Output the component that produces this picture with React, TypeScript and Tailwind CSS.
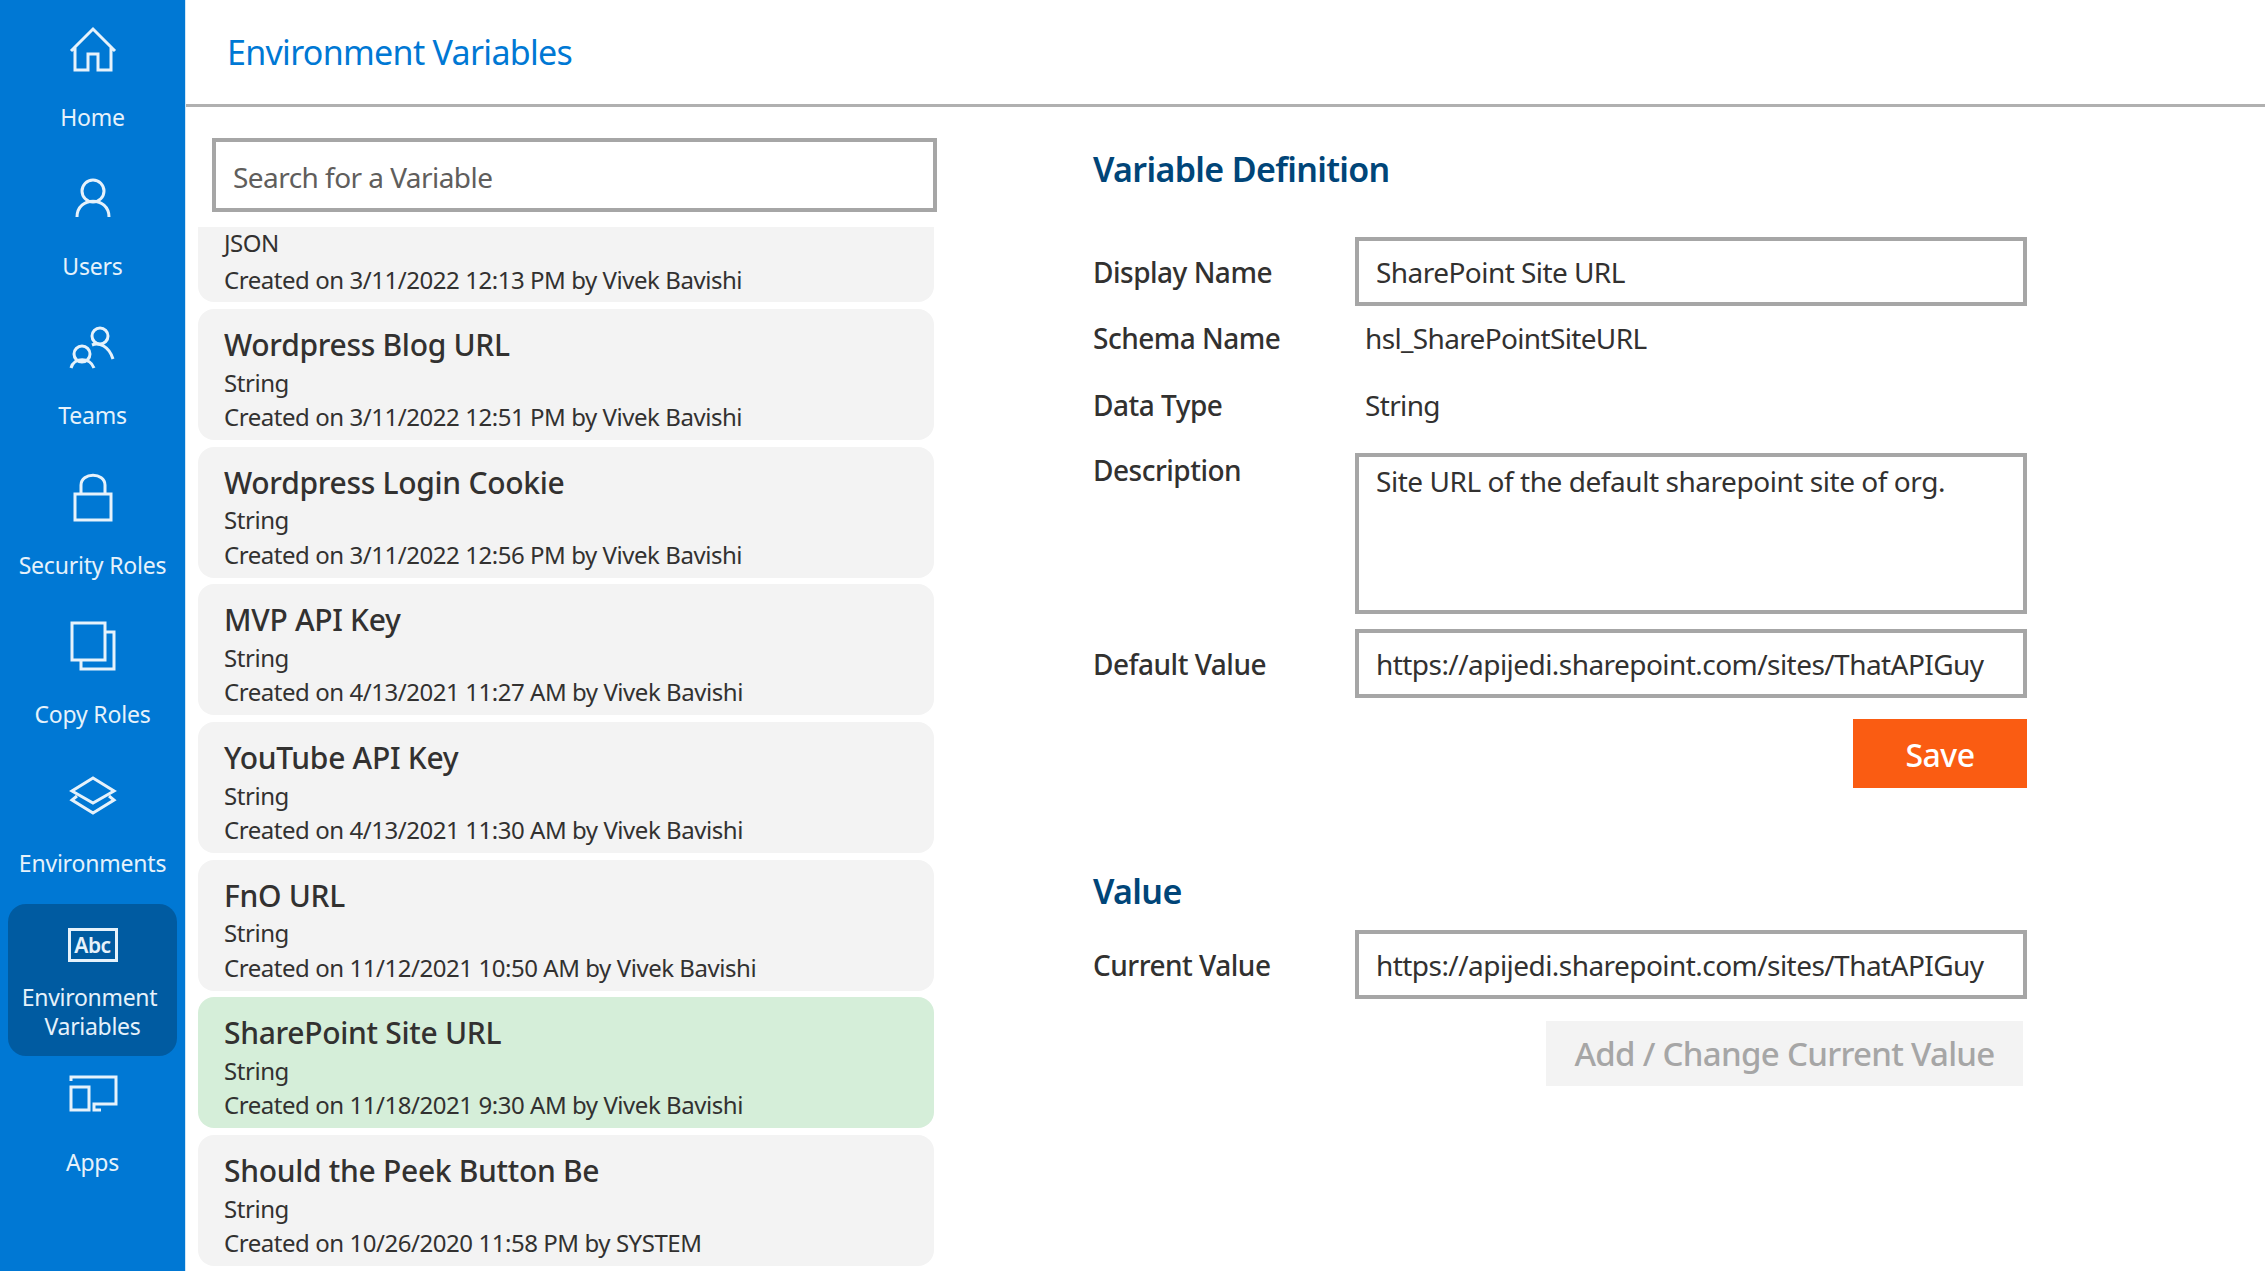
const font = { fontFamily: '"Noto Sans", "Open Sans", sans-serif' };

function NavIcon({ children }: { children: React.ReactNode }) {
  return (
    <svg width="92" height="56" viewBox="0 0 92 56" fill="none" stroke="#e6f2fb" strokeWidth="3" className="block">
      {children}
    </svg>
  );
}

function NavItem({ label, icon }: { label: string; icon: React.ReactNode }) {
  return (
    <div className="h-[149.4px] shrink-0 flex flex-col items-center pt-[22px]">
      <NavIcon>{icon}</NavIcon>
      <div className="mt-[23.5px] text-[23px] leading-[30px] tracking-[-0.2px] text-[#e6f2fb] whitespace-nowrap">{label}</div>
    </div>
  );
}

function Sidebar() {
  return (
    <div className="w-[186px] h-[1271px] shrink-0 bg-[#0078d4] border-r border-[#cfe6f7] flex flex-col overflow-hidden">
      <NavItem label="Home" icon={<path d="M24 29 L46 7 L68 29 M28 25 V48 H41 V32 H51 V48 H64 V25" />} />
      <NavItem
        label="Users"
        icon={
          <>
            <circle cx="46" cy="20" r="11" />
            <path d="M30 46 C30 25 62 25 62 46" />
          </>
        }
      />
      <NavItem
        label="Teams"
        icon={
          <>
            <circle cx="53" cy="15" r="8" />
            <path d="M45 24 C52 21 62 25 66 38" />
            <circle cx="35" cy="33" r="8" />
            <path d="M24 47 C27 36 43 36 47 47" />
          </>
        }
      />
      <NavItem
        label="Security Roles"
        icon={
          <>
            <rect x="28" y="24" width="36" height="26" />
            <path d="M34 24 V15 C34 2 58 2 58 15 V24" />
          </>
        }
      />
      <NavItem
        label="Copy Roles"
        icon={
          <>
            <rect x="25" y="3" width="33" height="37" />
            <path d="M58 12 H67 V49 H34 V40" />
          </>
        }
      />
      <NavItem
        label="Environments"
        icon={
          <>
            <path d="M46 9 L67 22 L46 34 L25 22 Z" />
            <path d="M30 27 L25 31 L46 44 L67 31 L62 27" />
          </>
        }
      />
      <div className="mx-2 mt-[8px] -mb-[10.5px] h-[152px] shrink-0 rounded-[18px] bg-[#005ba1] flex flex-col items-center pt-[24px]">
        <div className="w-[50px] h-[34px] border-[3px] border-[#e6f2fb] flex items-center justify-center text-[21px] font-semibold tracking-[-0.5px] leading-none text-[#e6f2fb]">
          Abc
        </div>
        <div className="mt-[21px] text-[23px] leading-[29px] tracking-[-0.3px] text-center text-[#e6f2fb] -translate-x-[3px]">
          Environment
          <br />
          <span className="inline-block translate-x-[3px]">Variables</span>
        </div>
      </div>
      <NavItem
        label="Apps"
        icon={
          <>
            <path d="M24 13 V9 H69 V36 H47 V42 H54" />
            <rect x="24" y="19" width="18" height="23" />
          </>
        }
      />
    </div>
  );
}

const cards = [
  { title: "Wordpress Blog URL", type: "String", created: "Created on 3/11/2022 12:51 PM by Vivek Bavishi" },
  { title: "Wordpress Login Cookie", type: "String", created: "Created on 3/11/2022 12:56 PM by Vivek Bavishi" },
  { title: "MVP API Key", type: "String", created: "Created on 4/13/2021 11:27 AM by Vivek Bavishi" },
  { title: "YouTube API Key", type: "String", created: "Created on 4/13/2021 11:30 AM by Vivek Bavishi" },
  { title: "FnO URL", type: "String", created: "Created on 11/12/2021 10:50 AM by Vivek Bavishi" },
  { title: "SharePoint Site URL", type: "String", created: "Created on 11/18/2021 9:30 AM by Vivek Bavishi", active: true },
  { title: "Should the Peek Button Be", type: "String", created: "Created on 10/26/2020 11:58 PM by SYSTEM" },
];

function VariableCard({ title, type, created, active }: { title: string; type: string; created: string; active?: boolean }) {
  return (
    <div className={`h-[131px] rounded-[16px] px-[26px] pt-[16px] text-[#323130] ${active ? "bg-[#d5eed9]" : "bg-[#f3f3f3]"}`}>
      <div className="text-[30px] leading-[40px] font-medium tracking-[-0.3px] whitespace-nowrap">{title}</div>
      <div className="mt-[0.5px] text-[24px] leading-[34.5px] tracking-[-0.45px]">{type}</div>
      <div className="text-[24px] leading-[33px] tracking-[-0.45px] whitespace-nowrap">{created}</div>
    </div>
  );
}

function VariableList() {
  return (
    <div className="w-[811px] shrink-0 pl-[12px]">
      <div className="ml-[14px] mt-[31px] w-[725px] h-[74px] border-[4px] border-[#a6a6a6] pl-[17px] pt-[3px] flex items-center text-[28px] tracking-[-0.55px] text-[#605e5c]">
        Search for a Variable
      </div>
      <div className="mt-[15px] h-[1044px] w-[736px] overflow-hidden">
        <div className="h-[75px] rounded-b-[16px] bg-[#f3f3f3] px-[26px] text-[24px] tracking-[-0.45px] text-[#323130]">
          <div className="leading-[31px]">JSON</div>
          <div className="mt-[5px] leading-[33px] whitespace-nowrap">Created on 3/11/2022 12:13 PM by Vivek Bavishi</div>
        </div>
        <div className="mt-[7px] flex flex-col gap-[6.7px]">
          {cards.map((c) => (
            <VariableCard key={c.title} {...c} />
          ))}
        </div>
      </div>
    </div>
  );
}

function Field({ value, h = "h-[69px]", top, tracking = "tracking-[-0.55px]" }: { value: string; h?: string; top?: boolean; tracking?: string }) {
  return (
    <div className={`w-[672px] shrink-0 ${h} border-[4px] border-[#a6a6a6] pl-[17px] flex text-[28px] ${tracking} text-[#323130] whitespace-nowrap ${top ? "items-start pt-[3px]" : "items-center"}`}>
      {value}
    </div>
  );
}

function Label({ children }: { children: React.ReactNode }) {
  return <div className="w-[262px] shrink-0 text-[28px] font-medium tracking-[-0.5px] text-[#323130] whitespace-nowrap">{children}</div>;
}

function DefinitionForm() {
  return (
    <div className="w-[1030px] shrink-0 pl-[96px]">
      <div className="mt-[38px] text-[34px] leading-[48px] font-semibold tracking-[-0.65px] text-[#004578]">Variable Definition</div>

      <div className="mt-[44px] flex items-center">
        <Label>Display Name</Label>
        <Field value="SharePoint Site URL" />
      </div>
      <div className="mt-[12px] h-[40px] flex items-center">
        <Label>Schema Name</Label>
        <div className="pl-[10px] text-[28px] tracking-[-0.65px] text-[#323130]">hsl_SharePointSiteURL</div>
      </div>
      <div className="mt-[27px] h-[40px] flex items-center">
        <Label>Data Type</Label>
        <div className="pl-[10px] text-[28px] tracking-[-0.65px] text-[#323130]">String</div>
      </div>
      <div className="mt-[28px] flex items-start">
        <div className="-mt-[4px]">
          <Label>Description</Label>
        </div>
        <Field value="Site URL of the default sharepoint site of org." h="h-[161px]" top tracking="tracking-[-0.45px]" />
      </div>
      <div className="mt-[15px] flex items-center">
        <Label>Default Value</Label>
        <Field value="https://apijedi.sharepoint.com/sites/ThatAPIGuy" />
      </div>
      <div className="mt-[21px] flex justify-end w-[934px]">
        <div className="w-[174px] h-[69px] pt-[3px] bg-[#fa5c12] flex items-center justify-center text-[32px] font-medium tracking-[-0.5px] text-white">Save</div>
      </div>

      <div className="mt-[79px] text-[34px] leading-[48px] font-semibold tracking-[-0.65px] text-[#004578]">Value</div>
      <div className="mt-[15px] flex items-center">
        <Label>Current Value</Label>
        <Field value="https://apijedi.sharepoint.com/sites/ThatAPIGuy" />
      </div>
      <div className="mt-[22px] flex justify-end w-[930px]">
        <div className="w-[477px] h-[65px] bg-[#f3f3f3] flex items-center justify-center text-[33px] font-medium tracking-[-0.7px] text-[#a6a6a6] whitespace-nowrap">
          Add / Change Current Value
        </div>
      </div>
    </div>
  );
}

export default function App() {
  return (
    <div className="flex w-[2265px] h-[1271px] overflow-hidden bg-white" style={font}>
      <Sidebar />
      <div className="flex-1 flex flex-col">
        <div className="h-[107px] shrink-0 border-b-[3px] border-[#b0b0b0] pl-[41px] flex items-center text-[34px] tracking-[-0.7px] text-[#0078d4]">
          Environment Variables
        </div>
        <div className="flex">
          <VariableList />
          <DefinitionForm />
        </div>
      </div>
    </div>
  );
}
